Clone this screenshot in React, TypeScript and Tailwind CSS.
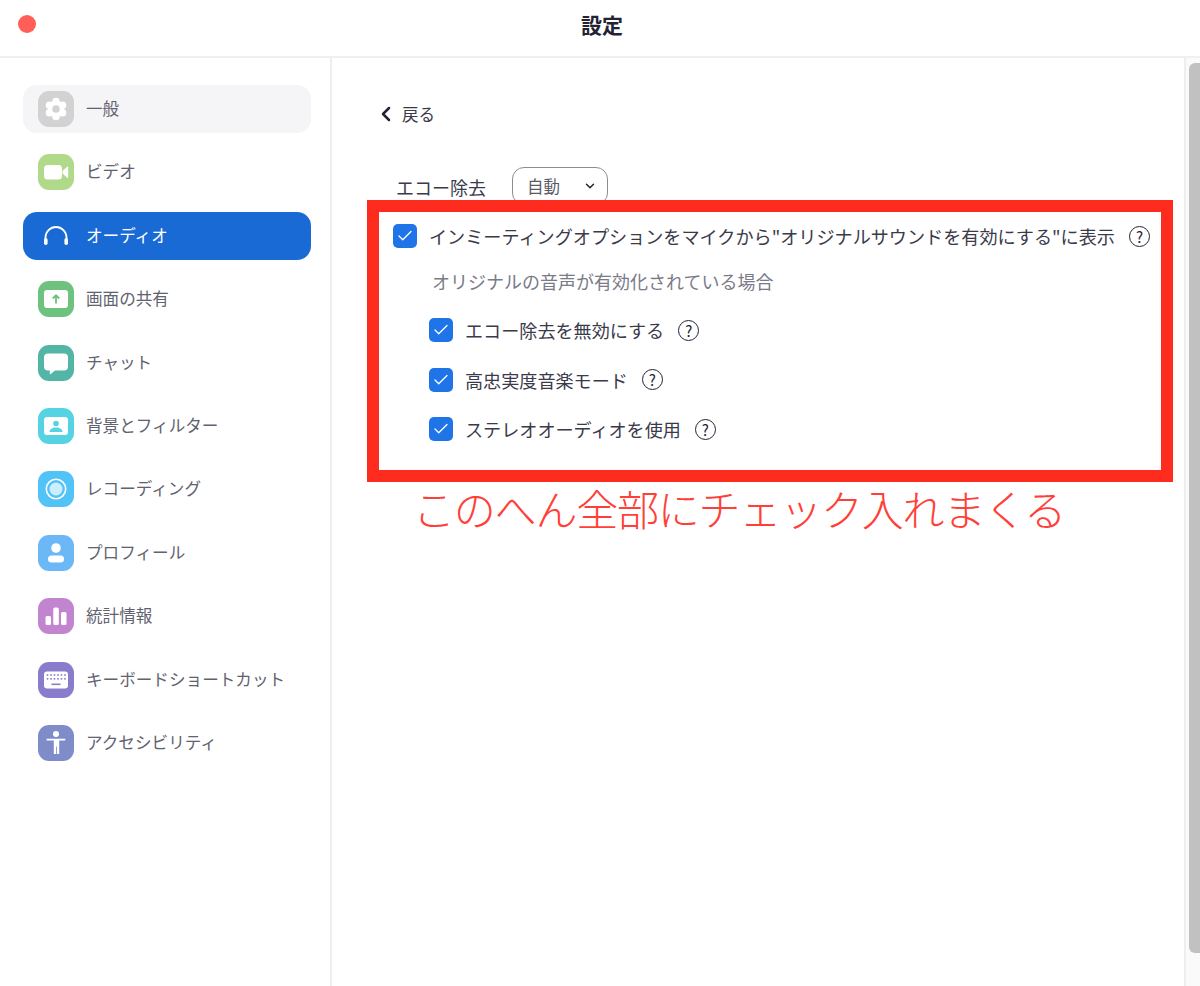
import { Check, ChevronDown, ChevronLeft } from 'lucide-react';
import type { ReactNode } from 'react';

const Gear = () => (
  <svg viewBox="0 0 36 36" className="h-9 w-9" fill="#fff">
    <circle cx="18" cy="18" r="8" />
    <circle cx="18" cy="10.500" r="3.800" />
    <circle cx="18" cy="25.500" r="3.800" />
    <circle cx="11.500" cy="14.250" r="3.800" />
    <circle cx="24.500" cy="14.250" r="3.800" />
    <circle cx="11.500" cy="21.750" r="3.800" />
    <circle cx="24.500" cy="21.750" r="3.800" />
    <circle cx="18" cy="18" r="3.800" fill="#d2d2d2" />
  </svg>
);

const Video = () => (
  <svg viewBox="0 0 36 36" className="h-9 w-9">
    <rect x="6" y="11" width="18" height="14.500" rx="3.500" fill="#fff" />
    <path fill="#fff" d="M24.500 17l4.700-4.300c.5-.4 1-.1 1 .5v10c0 .6-.5.9-1 .5L24.500 19.500z" />
  </svg>
);

const Headphones = () => (
  <svg viewBox="0 0 36 36" className="h-9 w-9">
    <path d="M7.500 24v-4.500a10.500 10.500 0 0 1 21 0V24" fill="none" stroke="#fff" strokeWidth="1.800" />
    <rect x="6" y="20" width="3.600" height="7" rx="1.800" fill="#fff" />
    <rect x="26.400" y="20" width="3.600" height="7" rx="1.800" fill="#fff" />
  </svg>
);

const Share = () => (
  <svg viewBox="0 0 36 36" className="h-9 w-9">
    <rect x="6" y="9" width="24" height="18" rx="3" fill="#fff" />
    <path d="M18 22.500v-8M14.800 17.500l3.200-3.200 3.200 3.200" fill="none" stroke="#6dc27d" strokeWidth="1.800" />
  </svg>
);

const Chat = () => (
  <svg viewBox="0 0 36 36" className="h-9 w-9">
    <path
      fill="#fff"
      d="M10 8.500h16a4 4 0 0 1 4 4v9a4 4 0 0 1-4 4H17l-4.200 3.600c-.5.400-1 .1-1-.5v-3.100H10a4 4 0 0 1-4-4v-9a4 4 0 0 1 4-4z"
    />
  </svg>
);

const Background = () => (
  <svg viewBox="0 0 36 36" className="h-9 w-9">
    <rect x="6" y="9" width="24" height="18" rx="3" fill="#fff" />
    <circle cx="18" cy="15.500" r="2.800" fill="#56d3e3" />
    <path fill="#56d3e3" d="M11.500 24c0-3 3-4.500 6.500-4.500s6.500 1.500 6.500 4.500z" />
  </svg>
);

const Record = () => (
  <svg viewBox="0 0 36 36" className="h-9 w-9">
    <circle cx="18" cy="18" r="9.700" fill="none" stroke="#fff" strokeWidth="1.600" />
    <circle cx="18" cy="18" r="6.500" fill="#cdeefd" />
  </svg>
);

const Profile = () => (
  <svg viewBox="0 0 36 36" className="h-9 w-9">
    <circle cx="18" cy="13" r="4.800" fill="#fff" />
    <rect x="10" y="20.500" width="16" height="7" rx="3.500" fill="#fff" />
  </svg>
);

const Stats = () => (
  <svg viewBox="0 0 36 36" className="h-9 w-9" fill="#fff">
    <rect x="7.500" y="18" width="5.500" height="9" rx="1.500" />
    <rect x="15.300" y="9.500" width="5.500" height="17.500" rx="1.500" />
    <rect x="23" y="14" width="5.500" height="13" rx="1.500" />
  </svg>
);

const Keyboard = () => (
  <svg viewBox="0 0 36 36" className="h-9 w-9">
    <rect x="6" y="9.500" width="24" height="17" rx="3" fill="#fff" />
    <g fill="#8a7ccd">
      {[9.500, 13, 16.500, 20, 23.500, 27].map((x) => (
        <rect key={x} x={x - 0.8} y="12.200" width="1.600" height="1.600" />
      ))}
      {[9.500, 13, 16.500, 20, 23.500, 27].map((x) => (
        <rect key={x} x={x - 0.8} y="16" width="1.600" height="1.600" />
      ))}
      <rect x="13.500" y="21.500" width="9" height="1.600" />
    </g>
  </svg>
);

const Accessibility = () => (
  <svg viewBox="0 0 36 36" className="h-9 w-9" fill="#fff">
    <circle cx="18" cy="9" r="3" />
    <path d="M9.500 13.700h17c.7 0 1 .4 1 .9s-.3.900-1 .9h-5.300V29h-2.300v-7.500h-.8V29h-2.300V15.500H9.500c-.7 0-1-.4-1-.9s.3-.9 1-.9z" />
  </svg>
);

interface NavItem {
  label: string;
  icon: ReactNode;
  color: string;
  active?: boolean;
  hovered?: boolean;
}

const navItems: NavItem[] = [
  { label: '一般', icon: <Gear />, color: 'bg-[#d2d2d2]', hovered: true },
  { label: 'ビデオ', icon: <Video />, color: 'bg-[#b0d98a]' },
  { label: 'オーディオ', icon: <Headphones />, color: 'bg-[#196ad4]', active: true },
  { label: '画面の共有', icon: <Share />, color: 'bg-[#6dc27d]' },
  { label: 'チャット', icon: <Chat />, color: 'bg-[#52b5a5]' },
  { label: '背景とフィルター', icon: <Background />, color: 'bg-[#56d3e3]' },
  { label: 'レコーディング', icon: <Record />, color: 'bg-[#52c3f7]' },
  { label: 'プロフィール', icon: <Profile />, color: 'bg-[#6cb8f7]' },
  { label: '統計情報', icon: <Stats />, color: 'bg-[#c185d0]' },
  { label: 'キーボードショートカット', icon: <Keyboard />, color: 'bg-[#8a7ccd]' },
  { label: 'アクセシビリティ', icon: <Accessibility />, color: 'bg-[#7f8cca]' },
];

function Help() {
  return (
    <span className="flex h-[21px] w-[21px] shrink-0 items-center justify-center rounded-full border-[1.5px] border-[#232333] text-[15px] font-normal leading-none text-[#232333]">
      ?
    </span>
  );
}

function Box() {
  return (
    <span className="flex h-6 w-6 shrink-0 items-center justify-center rounded-[5px] bg-[#1f75e8]">
      <Check className="h-[18px] w-[18px] text-white" strokeWidth={1.75} />
    </span>
  );
}

function SubOption({ label }: { label: string }) {
  return (
    <div className="flex h-6 items-center">
      <Box />
      <span className="ml-3 mr-[14px] text-[18.100px] leading-6 text-[#3a3a4a]">{label}</span>
      <Help />
    </div>
  );
}

export default function App() {
  return (
    <div className="relative flex h-[986px] w-[1200px] flex-col overflow-hidden bg-white font-['Noto_Sans_CJK_JP',sans-serif]">
      <header className="relative flex h-[58px] shrink-0 items-center justify-center border-b-2 border-[#eef0f4] pb-[6px] pl-1">
        <span className="absolute left-[18px] top-[15px] h-[18px] w-[18px] rounded-full bg-[#ff5f57]" />
        <h1 className="text-[21px] font-bold text-[#232333]">設定</h1>
      </header>

      <div className="flex min-h-0 flex-1">
        <nav className="flex w-[332px] shrink-0 flex-col gap-[15.4px] border-r-2 border-[#eceef2] pl-[23px] pr-[19px] pt-[27px]">
          {navItems.map((item) => (
            <div
              key={item.label}
              className={`flex h-12 items-center rounded-[14px] pl-[15px] ${
                item.active ? 'bg-[#196ad4]' : item.hovered ? 'bg-[#f5f5f7]' : ''
              }`}
            >
              <span className={`flex h-9 w-9 shrink-0 items-center justify-center rounded-[11px] ${item.color}`}>
                {item.icon}
              </span>
              <span className={`ml-3 pb-[1px] text-[16.6px] ${item.active ? 'text-white' : 'text-[#62626f]'}`}>
                {item.label}
              </span>
            </div>
          ))}
        </nav>

        <main className="min-w-0 flex-1 pl-[48px] pt-[42px]">
          <div className="flex h-7 items-center text-[#3a3a4a]">
            <ChevronLeft className="-ml-[6px] h-6 w-6 text-[#232333]" strokeWidth={2.5} />
            <span className="ml-1 text-[16.5px]">戻る</span>
          </div>

          <div className="mt-[39px] flex items-center pl-4">
            <span className="mt-[3px] text-[18px] text-[#3a3a4a]">エコー除去</span>
            <div className="ml-[26px] flex h-[38px] w-[96px] items-center rounded-xl border border-[#8c8c94] pl-[14px] pr-[10px]">
              <span className="text-[16.5px] text-[#5a5a66]">自動</span>
              <ChevronDown className="ml-auto h-[14px] w-[14px] text-[#232333]" strokeWidth={2.5} />
            </div>
          </div>

          <div className="mt-[19px] flex h-6 items-center pl-[13px]">
            <Box />
            <span className="ml-3 mr-[14px] whitespace-nowrap text-[18.130px] leading-6 text-[#3a3a4a]">
              インミーティングオプションをマイクから"オリジナルサウンドを有効にする"に表示
            </span>
            <Help />
          </div>

          <p className="ml-[52px] mt-[21px] text-[18px] leading-6 text-[#7a7a88]">オリジナルの音声が有効化されている場合</p>

          <div className="ml-[49px] mt-[25px] flex flex-col gap-[25.700px]">
            <SubOption label="エコー除去を無効にする" />
            <SubOption label="高忠実度音楽モード" />
            <SubOption label="ステレオオーディオを使用" />
          </div>
        </main>

        <div className="w-4 shrink-0 border-l-2 border-[#eeeeee] bg-[#fafafa] pl-[3px] pt-[5px]">
          <div className="h-[890px] rounded-l-[6px] bg-[#c1c1c1]" />
        </div>
      </div>

      <div className="absolute left-[367px] top-[200px] h-[282px] w-[806px] border-[12px] border-[#fe2c1f]" />
      <span className="absolute left-[413px] top-[478px] whitespace-nowrap text-[42px] font-light leading-[60px] tracking-[-1.2px] text-[#ff4038]">
        このへん全部にチェック入れまくる
      </span>
    </div>
  );
}
